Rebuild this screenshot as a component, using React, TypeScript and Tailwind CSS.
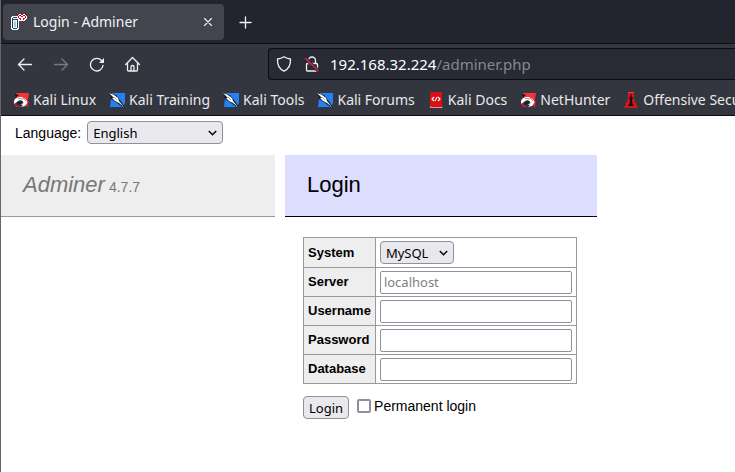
import React from "react";

const UI_FONT = "font-['Noto_Sans',sans-serif]";

function AdminerIcon() {
  return (
    <svg width="16" height="16" viewBox="0 0 16 16" shapeRendering="crispEdges" aria-hidden="true">
      <path d="M1 2h6v1h1v12H7v1H1v-1H0V3h1z" fill="#fff" />
      <path d="M2 3h4v1h1v10H6v1H2v-1H1V4h1z" fill="#16475a" />
      <path d="M2 4h4v1H2zM2 6h4v8H2z" fill="#f4f8f9" />
      <path d="M3 7h2v6H3z" fill="#b7c7ce" />
      <path d="M8 0h6v1h1v1h1v3h-1v1h-1v1H8V6H7V5H6V2h1V1h1z" fill="#fff" />
      <path d="M8 1h2v1H8zM7 2h1v2H7zM8 4h2v1H8zM9 5h1v1H9zM12 1h2v1h-2zM14 2h1v2h-1zM12 4h2v1h-2zM12 5h1v1h-1zM10 2h2v1h-2zM10 0h2v1h-2z" fill="#f00018" />
    </svg>
  );
}

function DragonIcon() {
  return (
    <svg width="16" height="16" viewBox="0 0 16 16" aria-hidden="true">
      <path d="M3 1h13l-2 13-4-5-6-4z" fill="#fb2f38" />
      <path d="M2 2l4 1-3 2z" fill="#0d0d12" />
      <path d="M11 11l3 4h1l1-6z" fill="#e0203a" />
      <path d="M1 9c1-3 3.500-4 6-4 4 0 7 2.500 7.500 5.500L12 14l-4 1 2-2-2-.5 2.500-1.500C10 9 9 8 7 8.200 5 8.400 4 10 1 12z" fill="#fff" />
      <path d="M5 10l3-1 1.500 1.500L7 12l-3 1z" fill="#1b1d26" />
      <path d="M1 12l2-1 1 2 4 2H3z" fill="#c9163a" />
      <path d="M5 6.500l5 .5M10 6l3 3" stroke="#6b6b74" strokeWidth=".7" fill="none" />
    </svg>
  );
}

function KnifeIcon() {
  return (
    <svg width="16" height="16" viewBox="0 0 16 16" aria-hidden="true">
      <path d="M3 1h13v10l-2 4H1l1-8z" fill="#2282f5" />
      <path d="M0 1l7 2 4 5 5 7-4-1-4-3-6-4z" fill="#1a1d27" />
      <path d="M0 1l5 2 4 3 1 3 5 6-5-4-4-2-3-3 2 0z" fill="#fff" />
      <path d="M5 5l3 3" stroke="#888c95" strokeWidth=".8" />
    </svg>
  );
}

function DocsIcon() {
  return (
    <svg width="16" height="16" viewBox="0 0 16 16" aria-hidden="true">
      <path d="M2 1l2-1h10v16H2z" fill="#d90f13" />
      <path d="M2.500 14v1.500H14V14.500" fill="none" stroke="#e7b5b8" strokeWidth=".8" />
      <path d="M6 5L4 7l2 2M10 5l2 2-2 2M7 9l2-4" stroke="#fff" strokeWidth="1.100" fill="none" />
    </svg>
  );
}

function OffsecIcon() {
  return (
    <svg width="16" height="16" viewBox="0 0 16 16" aria-hidden="true">
      <path d="M5 0h6v7l4 9H1l4-9z" fill="#d0181c" />
      <path d="M7.500 2h1v2l1.500 2-1 2 .5 4 1.500 2h-6l1.500-2 .5-4-1-2 1.500-2z" fill="#220b10" />
      <path d="M5 .5h6" stroke="#f13a3a" strokeWidth="1" />
    </svg>
  );
}

const strokeProps = {
  fill: "none",
  stroke: "currentColor",
  strokeWidth: 1.3,
  strokeLinecap: "round",
  strokeLinejoin: "round",
} as const;

const bookmarks = [
  { name: "Kali Linux", Icon: DragonIcon },
  { name: "Kali Training", Icon: KnifeIcon },
  { name: "Kali Tools", Icon: KnifeIcon },
  { name: "Kali Forums", Icon: KnifeIcon },
  { name: "Kali Docs", Icon: DocsIcon },
  { name: "NetHunter", Icon: DragonIcon },
  { name: "Offensive Security", Icon: OffsecIcon },
];

function TabStrip() {
  return (
    <div className="flex h-11 items-center border-b border-[#0d0f15] bg-[#22252e] pl-0.5">
      <div className="flex h-9 w-[221px] items-center rounded bg-[#42454d] px-2 text-[#f2f2f3]">
        <AdminerIcon />
        <span className="ml-1.5 flex-1 text-sm">Login - Adminer</span>
        <button type="button" aria-label="Close tab" className="flex size-4 items-center justify-center">
          <svg width="16" height="16" viewBox="0 0 16 16" aria-hidden="true">
            <path d="M4.500 4.500l7 7M11.500 4.500l-7 7" {...strokeProps} strokeWidth={1.1} />
          </svg>
        </button>
      </div>
      <button type="button" aria-label="New tab" className="ml-3 flex size-4 items-center justify-center text-[#f2f2f3]">
        <svg width="16" height="16" viewBox="0 0 16 16" aria-hidden="true">
          <path d="M9.500 3v11M4 8.500h11" {...strokeProps} />
        </svg>
      </button>
    </div>
  );
}

function NavBar() {
  return (
    <div className="flex h-10 items-center pl-4 text-[#f0f0f1]">
      <div className="flex gap-5">
        <button type="button" aria-label="Back">
          <svg width="16" height="16" viewBox="0 0 16 16" aria-hidden="true">
            <path d="M14.500 8.500H1.500M7 3L1.500 8.500 7 14" {...strokeProps} />
          </svg>
        </button>
        <button type="button" aria-label="Forward" disabled className="text-[#777a80]">
          <svg width="16" height="16" viewBox="0 0 16 16" aria-hidden="true">
            <path d="M1.500 8.500h13M9 3l5.500 5.500L9 14" {...strokeProps} />
          </svg>
        </button>
        <button type="button" aria-label="Reload">
          <svg width="16" height="16" viewBox="0 0 16 16" aria-hidden="true">
            <path d="M14 9.500A6.300 6.300 0 1 1 12.500 4.500L14 6" {...strokeProps} />
            <path d="M15 2v5h-5z" fill="currentColor" />
          </svg>
        </button>
        <button type="button" aria-label="Home">
          <svg width="16" height="16" viewBox="0 0 16 16" aria-hidden="true">
            <path d="M.7 8.500L7.500 1.500l7 7M2.500 7v7c0 .6.4 1 1 1h8c.6 0 1-.4 1-1V7M6 15v-4c0-.8.7-1.500 1.500-1.500S9 10.200 9 11v4" {...strokeProps} />
          </svg>
        </button>
      </div>
      <div className="ml-[127px] flex h-8 flex-1 items-center rounded-l border border-r-0 border-[#0c0d12] bg-[#282a36] pl-[7px]">
        <svg width="16" height="16" viewBox="0 0 16 16" aria-hidden="true">
          <path d="M8 .8c2 1.400 4 2 6.500 2.200.4 5.500-2 10-6.500 12.200C3.500 13 1.100 8.500 1.500 3 4 2.800 6 2.200 8 .8z" {...strokeProps} />
        </svg>
        <svg className="ml-3" width="16" height="16" viewBox="0 0 16 16" aria-hidden="true">
          <path d="M4.500 7V4.500a3.500 3.500 0 0 1 7 0V7M4 7.500h8.500c.6 0 1 .4 1 1V14c0 .6-.4 1-1 1h-9c-.6 0-1-.4-1-1V8.500c0-.6.4-1 1-1z" {...strokeProps} />
          <path d="M1 2l13.500 13" stroke="#282a36" strokeWidth="3.500" />
          <path d="M1 2l13.500 13" stroke="#e51c4d" strokeWidth="1.500" />
        </svg>
        <div className="ml-2.5 text-[15px] whitespace-nowrap text-white">
          192.168.32.224<span className="text-[#858791]">/adminer.php</span>
        </div>
      </div>
    </div>
  );
}

function Bookmarks() {
  return (
    <nav aria-label="Bookmarks" className="flex h-8 items-center gap-[13px] overflow-hidden border-b border-[#0c0c15] pt-px pl-3 text-sm text-[#e9e9ea]">
      {bookmarks.map(({ name, Icon }) => (
        <a key={name} href="#" className="flex shrink-0 items-center gap-1 whitespace-nowrap">
          <Icon />
          {name}
        </a>
      ))}
    </nav>
  );
}

function Select({ id, option, width }: { id: string; option: string; width: string }) {
  return (
    <div className={`relative ${width}`}>
      <select id={id} className={`${UI_FONT} block h-[23px] w-full appearance-none rounded border border-[#8f8f9d] bg-[#e9e9ed] pr-5 pl-[5px] text-[13px] leading-5 text-black`}>
        <option>{option}</option>
      </select>
      <svg className="pointer-events-none absolute top-2 right-1.5" width="9" height="8" viewBox="0 0 9 8" aria-hidden="true">
        <path d="M.8 2l3.700 3.700L8.200 2" fill="none" stroke="#000" strokeWidth="1.500" />
      </svg>
    </div>
  );
}

const fields = [
  { id: "server", label: "Server", type: "text", placeholder: "localhost" },
  { id: "username", label: "Username", type: "text", placeholder: "" },
  { id: "password", label: "Password", type: "password", placeholder: "" },
  { id: "database", label: "Database", type: "text", placeholder: "" },
];

function LoginForm() {
  const th = "border border-[#999] bg-[#eee] px-1 text-left text-[13px] font-bold";
  const td = "border border-[#999] px-1";
  return (
    <form className="mt-5 ml-[18px]" onSubmit={(e) => e.preventDefault()}>
      <table className="border-collapse">
        <tbody>
          <tr className="h-[30px]">
            <th scope="row" className={th}><label htmlFor="system">System</label></th>
            <td className={td}><Select id="system" option="MySQL" width="w-[74px]" /></td>
          </tr>
          {fields.map((f) => (
            <tr key={f.id} className="h-[29px]">
              <th scope="row" className={th}><label htmlFor={f.id}>{f.label}</label></th>
              <td className={td}>
                <input
                  id={f.id}
                  type={f.type}
                  placeholder={f.placeholder}
                  className={`${UI_FONT} block h-[23px] w-48 rounded-xs border border-[#8f8f9d] bg-white px-[3px] text-[13px] placeholder:text-[#808080]`}
                />
              </td>
            </tr>
          ))}
        </tbody>
      </table>
      <div className="mt-3 flex items-start">
        <button type="submit" className={`${UI_FONT} h-[23px] rounded border border-[#8f8f9d] bg-[#e9e9ed] px-[5px] text-[13px] leading-5`}>
          Login
        </button>
        <label className="ml-2 flex items-center gap-[3px] text-sm">
          <input type="checkbox" className="size-3.5 appearance-none rounded-xs border-2 border-[#8f8f9d] bg-white" />
          Permanent login
        </label>
      </div>
    </form>
  );
}

export default function App() {
  return (
    <div className="min-h-screen overflow-hidden border-l border-[#666] bg-white font-['Liberation_Sans',Arial,sans-serif] text-black">
      <header className={`${UI_FONT} bg-[#33363e]`}>
        <TabStrip />
        <NavBar />
        <Bookmarks />
      </header>
      <main>
        <div className="flex h-[39px] items-center gap-1.5 pb-1.5 pl-[14px] text-sm">
          <label htmlFor="language">Language:</label>
          <Select id="language" option="English" width="w-[136px]" />
        </div>
        <div className="flex items-start gap-2.5">
          <h1 className="flex h-[62px] w-[274px] shrink-0 items-baseline gap-1 border-b border-[#999] bg-[#eee] px-[22px] pt-[14px] text-[22px] leading-8 text-[#777]">
            <a href="#" className="italic">Adminer</a>
            <span className="text-sm">4.7.7</span>
          </h1>
          <section className="w-78 shrink-0">
            <h2 className="h-[62px] border-b border-black bg-[#ddf] px-[22px] pt-[14px] text-[22px] leading-8">Login</h2>
            <LoginForm />
          </section>
        </div>
      </main>
    </div>
  );
}
